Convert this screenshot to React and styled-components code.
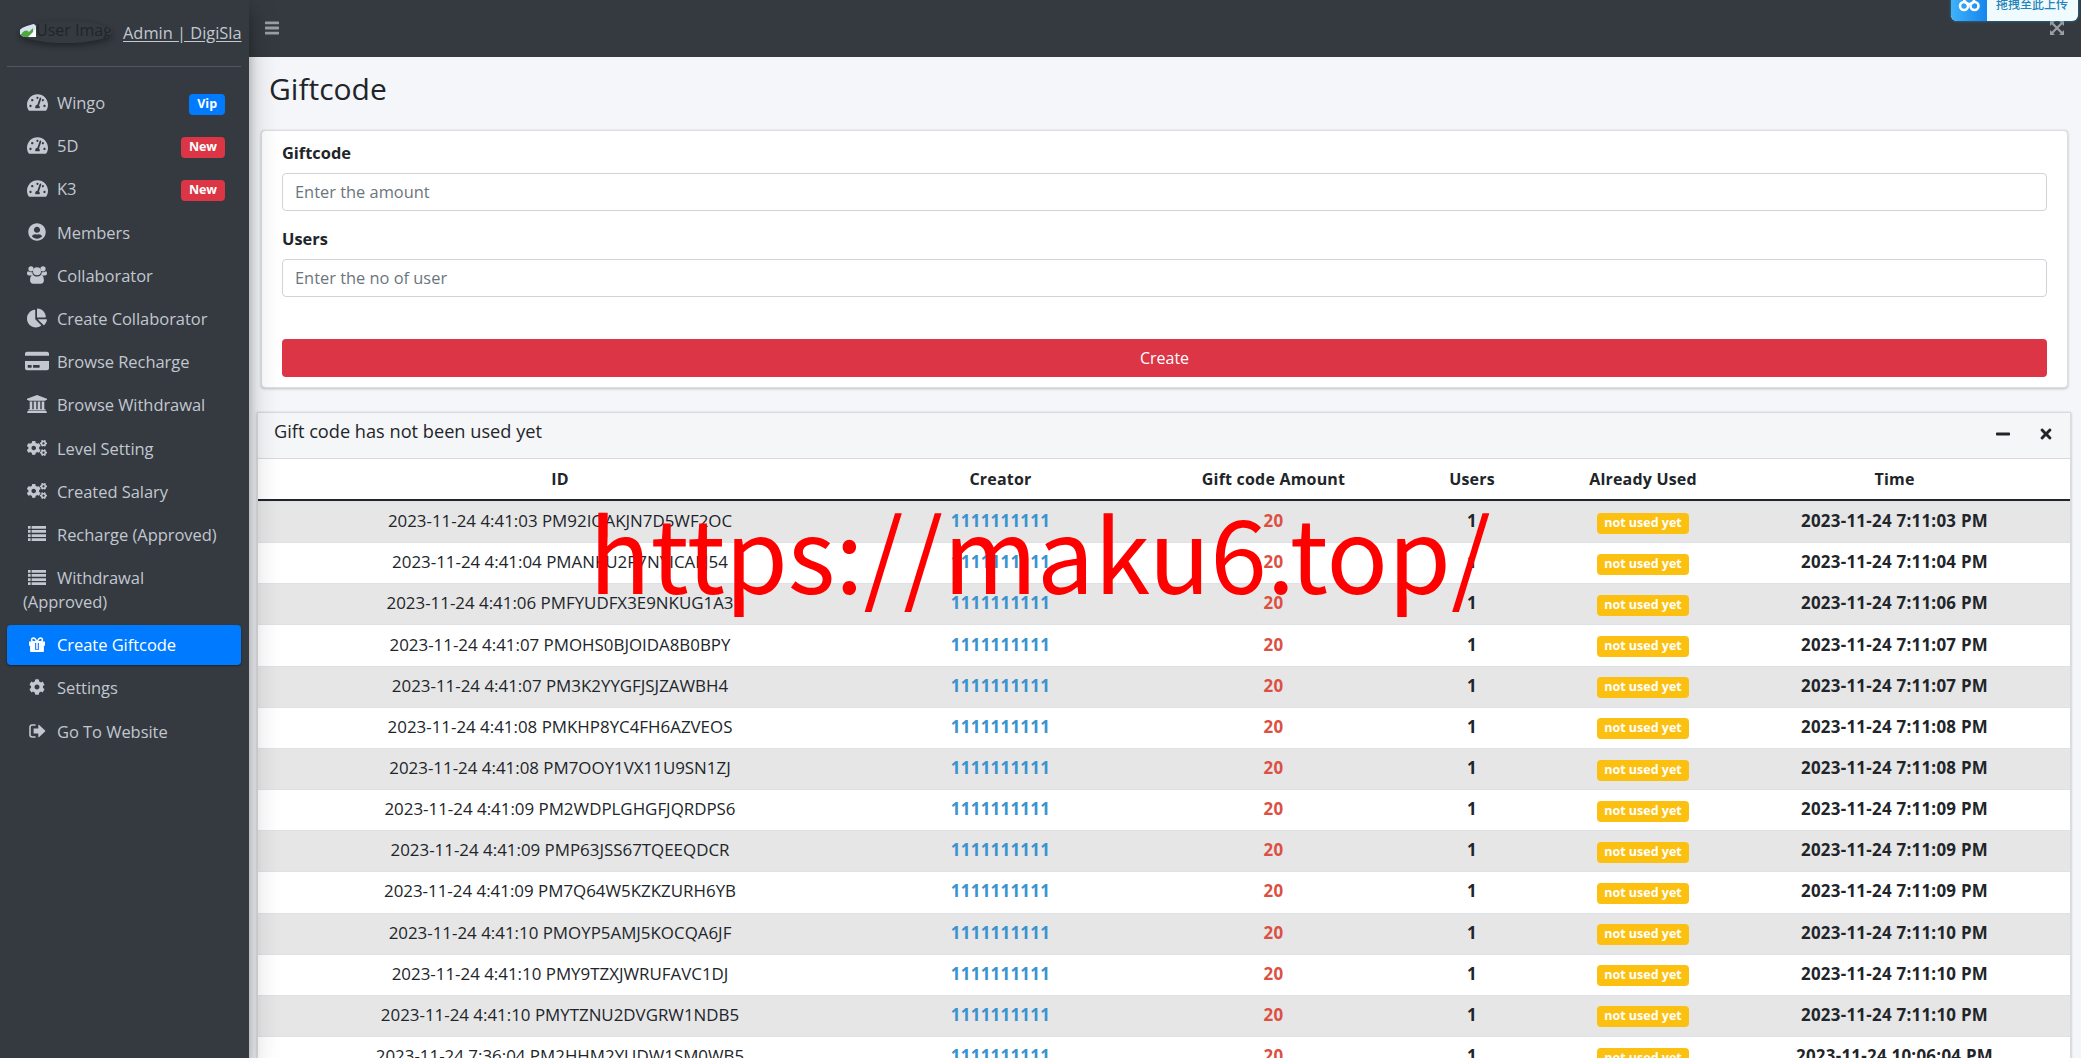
import React from "react";
import styled, { createGlobalStyle, css } from "styled-components";
import {
  FaTachometerAlt,
  FaUserCircle,
  FaChartPie,
  FaCreditCard,
  FaMinus,
  FaTimes,
  FaCog,
  FaCogs,
} from "react-icons/fa";

const GlobalStyle = createGlobalStyle`
  * {
    box-sizing: border-box;
  }

  body {
    margin: 0;
    overflow: hidden;
    font-family: "Open Sans", "Noto Sans", "Noto Sans CJK SC", sans-serif;
    font-size: 16px;
    line-height: 1.5;
    color: #212529;
    background: #f4f6f9;
  }
`;

const Wrapper = styled.div`
  display: flex;
  position: relative;
  width: 100%;
  height: 1058px;
  overflow: hidden;
`;

const Sidebar = styled.aside`
  position: relative;
  z-index: 2;
  flex: none;
  width: 249px;
  height: 100%;
  padding: 0 8px 0 7px;
  background: #343a40;
  color: #c2c7d0;
  box-shadow: 0 14px 28px rgba(0, 0, 0, 0.25), 0 10px 10px rgba(0, 0, 0, 0.22);
`;

const UserPanel = styled.div`
  display: flex;
  height: 67px;
  padding: 21px 0 0 12px;
  border-bottom: 1px solid #4f5962;

  a {
    margin-left: 11px;
    font-size: 16.4px;
    line-height: 24px;
    white-space: nowrap;
    text-decoration: underline;
    text-underline-offset: 2px;
    color: #c2c7d0;
  }
`;

const Avatar = styled.div`
  display: flex;
  flex: none;
  width: 93px;
  height: 22px;
  padding-left: 1px;
  border-radius: 50%;
  overflow: hidden;
  color: #212529;
  line-height: 18px;
  white-space: nowrap;
  box-shadow: 0 3px 6px rgba(0, 0, 0, 0.16), 0 3px 6px rgba(0, 0, 0, 0.23);

  svg {
    flex: none;
  }
`;

const Nav = styled.nav`
  margin-top: 16px;
`;

const NavLink = styled.a`
  display: block;
  position: relative;
  margin-bottom: 3.2px;
  padding: 8px 16px;
  border-radius: 4px;
  font-size: 16.5px;
  line-height: 24px;
  letter-spacing: -0.05px;
  color: #c2c7d0;

  ${(props) =>
    props.$active &&
    css`
      color: #fff;
      background: #007bff;
      box-shadow: 0 1px 3px rgba(0, 0, 0, 0.12), 0 1px 2px rgba(0, 0, 0, 0.24);
    `}
`;

const NavIcon = styled.span`
  display: inline-flex;
  align-items: center;
  justify-content: center;
  width: 28px;
  height: 20px;
  margin: 1px 6px 0 0;
  font-size: ${(props) => props.$size || 18}px;
  vertical-align: top;
`;

const Badge = styled.span`
  display: inline-block;
  padding: 4px 7px 5px;
  border-radius: 4px;
  font-size: 12.5px;
  font-weight: 700;
  line-height: 12px;
  color: #fff;
  background: ${(props) => props.$bg};
`;

const NavBadge = styled(Badge)`
  position: absolute;
  top: 11px;
  right: 16px;
  padding: 4px 8px 5px;
`;

const Main = styled.div`
  flex: 1;
  min-width: 0;
`;

const Topbar = styled.header`
  display: flex;
  justify-content: space-between;
  height: 57px;
  padding: 21px 17px 0 16px;
  background: #343a40;
  color: #9c9fa2;
  font-size: 14px;
`;

const Title = styled.h1`
  margin: 0;
  padding: 10px 0 0 20px;
  height: 73px;
  font-size: 30px;
  font-weight: 400;
  line-height: 43px;
`;

const FormCard = styled.section`
  height: 258px;
  margin: 0 13px 0 12px;
  padding: 9px 20px 0;
  border: 1px solid #dcdee1;
  border-radius: 4px;
  background: #fff;
  box-shadow: 0 0 1px rgba(0, 0, 0, 0.13), 0 1px 3px rgba(0, 0, 0, 0.2);
`;

const Field = styled.div`
  height: 86px;
  font-size: 16.4px;

  label {
    display: block;
    height: 33px;
    font-weight: 700;
    line-height: 26px;
  }

  input {
    display: block;
    width: 100%;
    height: 38px;
    padding: 5px 12px 7px;
    border: 1px solid #ced4da;
    border-radius: 4px;
    font: inherit;
    background: #fff;
  }

  input::placeholder {
    color: #6c757d;
    opacity: 1;
  }
`;

const CreateButton = styled.button`
  display: block;
  width: 100%;
  height: 38px;
  margin-top: 27px;
  border: 0;
  border-radius: 4px;
  font: inherit;
  color: #fff;
  background: #dc3545;
`;

const TableCard = styled.section`
  margin: 24px 10px 0 8px;
  border: 1px solid #d9dbdf;
  background: #fff;
  box-shadow: 0 0 1px rgba(0, 0, 0, 0.13), 0 1px 3px rgba(0, 0, 0, 0.2);
`;

const CardHeader = styled.div`
  display: flex;
  justify-content: space-between;
  height: 46px;
  padding: 5px 16px 0 16px;
  border-bottom: 1px solid #d7d9dc;
  background: #f5f6f8;
  font-size: 18.2px;
  line-height: 27px;
`;

const CardTools = styled.div`
  display: flex;
  gap: 27px;
  padding-top: 8px;
  font-size: 16px;
`;

const Table = styled.table`
  width: 100%;
  table-layout: fixed;
  border-collapse: separate;
  border-spacing: 0;
  text-align: center;

  th {
    height: 42px;
    padding: 0;
    border-bottom: 2px solid #212529;
    font-size: 16px;
    letter-spacing: 0.2px;
  }

  td {
    height: 41.17px;
    padding: 0 0 2px;
    border-top: 1px solid #dee2e6;
    font-size: 16.9px;
    line-height: 24px;
    white-space: nowrap;
  }

  tbody tr:nth-child(odd) {
    background: #e6e6e7;
  }
`;

const Strong = styled.td`
  font-weight: 700;
  letter-spacing: 0.27px;
  color: ${(props) => props.$color || "#212529"};
`;

const Watermark = styled.div`
  position: absolute;
  z-index: 3;
  top: 472px;
  left: 589px;
  font-family: "Noto Sans CJK SC", sans-serif;
  font-size: 101.5px;
  line-height: 155px;
  white-space: nowrap;
  color: #fe0000;
`;

const UploadTip = styled.div`
  display: flex;
  position: absolute;
  z-index: 4;
  top: -15px;
  left: 1951px;
  width: 127px;
  height: 36px;
  border-radius: 6px;
  overflow: hidden;
  background: #f0fbff;
  box-shadow: 0 0 3px #2680b8;
  color: #1f83b8;
  font: 500 12px/37px "Noto Sans CJK SC", sans-serif;

  span {
    padding-left: 9px;
    white-space: nowrap;
  }
`;

const BrokenImage = () => (
  <svg width="16" height="16" viewBox="0 0 16 16">
    <path d="M0 0h11l5 5v11H0z" fill="#d5e3f5" />
    <path d="M0 16c2-6 6-8 9-5l4-4v9z" fill="#4fa83d" />
    <path d="M8 16 16 8v8z" fill="#fff" />
  </svg>
);

const BarsIcon = () => (
  <svg width="14" height="14" viewBox="0 0 14 14" fill="currentColor">
    <rect y="0.5" width="14" height="2.8" rx="0.4" />
    <rect y="5.6" width="14" height="2.8" rx="0.4" />
    <rect y="10.7" width="14" height="2.8" rx="0.4" />
  </svg>
);

const ArrowsIcon = () => (
  <svg width="14" height="14" viewBox="0 0 14 14" fill="currentColor">
    <path d="M0 0h5L0 5zM14 0v5L9 0zM0 14V9l5 5zM14 14H9l5-5z" />
    <path d="M2 2l10 10M12 2 2 12" stroke="currentColor" strokeWidth="2.2" />
  </svg>
);

const ListIcon = () => (
  <svg width="18" height="15" viewBox="0 0 18 15" fill="currentColor">
    <path d="M0 0h2.6v2.7H0zM0 4.1h2.6v2.7H0zM0 8.2h2.6v2.7H0zM0 12.3h2.6V15H0z" />
    <path d="M3.6 0H18v2.7H3.6zM3.6 4.1H18v2.7H3.6zM3.6 8.2H18v2.7H3.6zM3.6 12.3H18V15H3.6z" />
  </svg>
);

const UsersIcon = () => (
  <svg width="20" height="18" viewBox="0 0 20 18" fill="currentColor">
    <circle cx="4" cy="2.8" r="2.6" />
    <circle cx="16" cy="2.8" r="2.6" />
    <circle cx="10" cy="5.3" r="4" />
    <path d="M1.6 5.4c1.2.9 2.7 1 3.7.5 0 1.4.4 2.6 1.2 3.5H2C.6 9.4 0 8.7 0 7.6 0 6.3.4 5 1.6 5.4zM18.4 5.4c-1.2.9-2.7 1-3.7.5 0 1.4-.4 2.6-1.2 3.5H18c1.4 0 2-.7 2-1.8 0-1.3-.4-2.6-1.6-2.2z" />
    <path d="M6.2 9c2.3 2 5.3 2 7.6 0 2.4 0 3.1 2.8 3.1 5.6 0 2-1.2 3.2-3 3.2H6.1c-1.8 0-3-1.2-3-3.2C3.1 11.8 3.8 9 6.2 9z" />
  </svg>
);

const BankIcon = () => (
  <svg width="20" height="18" viewBox="0 0 20 18" fill="currentColor">
    <path d="M10 0l10 3.7V5h-1.4v.8H1.4V5H0V3.7zM2.7 6.5h2.6v7.7h1.4V6.5h2.6v7.7h1.4V6.5h2.6v7.7h1.4V6.5h2.6v7.7h1.3v1.2H1.4v-1.2h1.3zM.7 16h18.6l.7 2H0z" />
  </svg>
);

const GiftIcon = () => (
  <svg width="16" height="15" viewBox="0 0 16 15" fill="currentColor">
    <path d="M0 4.6h16v4.2h-1.1v5.1c0 .7-.4 1.1-1.1 1.1H2.2c-.7 0-1.1-.4-1.1-1.1V8.8H0z" />
    <path d="M6.1 5.8h3.8v7H6.1z" fill="#007bff" />
    <path d="M7.2 4.8h1.6v7.1H7.2z" />
    <path
      d="M7.8 4.8C6.8 2.3 5.7 1 4.5 1S2.6 2 2.6 2.9s.8 1.9 1.9 1.9zM8.2 4.8C9.2 2.3 10.3 1 11.5 1s1.9 1 1.9 1.9-.8 1.9-1.9 1.9z"
      fill="none"
      stroke="currentColor"
      strokeWidth="1.5"
    />
  </svg>
);

const SignOutIcon = () => (
  <svg width="17" height="14" viewBox="0 0 17 14" fill="currentColor">
    <path
      d="M6 1H3.2C1.8 1 1 1.8 1 3.2v7.6C1 12.2 1.8 13 3.2 13H6"
      fill="none"
      stroke="currentColor"
      strokeWidth="1.6"
      strokeLinecap="round"
    />
    <path d="M4.6 4.6h4.7V1.2c0-.5.4-.7.9-.3l5.9 5.6c.3.3.3.7 0 1l-5.9 5.6c-.5.4-.9.2-.9-.3V9.4H4.6z" />
  </svg>
);

const links = [
  { icon: <FaTachometerAlt />, text: "Wingo", badge: "Vip", bg: "#007bff", size: 21 },
  { icon: <FaTachometerAlt />, text: "5D", badge: "New", bg: "#dc3545", size: 21 },
  { icon: <FaTachometerAlt />, text: "K3", badge: "New", bg: "#dc3545", size: 21 },
  { icon: <FaUserCircle />, text: "Members" },
  { icon: <UsersIcon />, text: "Collaborator" },
  { icon: <FaChartPie />, text: "Create Collaborator", size: 20 },
  { icon: <FaCreditCard />, text: "Browse Recharge", size: 24 },
  { icon: <BankIcon />, text: "Browse Withdrawal" },
  { icon: <FaCogs />, text: "Level Setting", size: 20 },
  { icon: <FaCogs />, text: "Created Salary", size: 20 },
  { icon: <ListIcon />, text: "Recharge (Approved)" },
  { icon: <ListIcon />, text: "Withdrawal (Approved)" },
  { icon: <GiftIcon />, text: "Create Giftcode", active: true },
  { icon: <FaCog />, text: "Settings", size: 16 },
  { icon: <SignOutIcon />, text: "Go To Website" },
];

const rows = [
  ["2023-11-24 4:41:03 PM92IOAKJN7D5WF2OC", "2023-11-24 7:11:03 PM"],
  ["2023-11-24 4:41:04 PMANKU2P7NYICALJ54", "2023-11-24 7:11:04 PM"],
  ["2023-11-24 4:41:06 PMFYUDFX3E9NKUG1A3", "2023-11-24 7:11:06 PM"],
  ["2023-11-24 4:41:07 PMOHS0BJOIDA8B0BPY", "2023-11-24 7:11:07 PM"],
  ["2023-11-24 4:41:07 PM3K2YYGFJSJZAWBH4", "2023-11-24 7:11:07 PM"],
  ["2023-11-24 4:41:08 PMKHP8YC4FH6AZVEOS", "2023-11-24 7:11:08 PM"],
  ["2023-11-24 4:41:08 PM7OOY1VX11U9SN1ZJ", "2023-11-24 7:11:08 PM"],
  ["2023-11-24 4:41:09 PM2WDPLGHGFJQRDPS6", "2023-11-24 7:11:09 PM"],
  ["2023-11-24 4:41:09 PMP63JSS67TQEEQDCR", "2023-11-24 7:11:09 PM"],
  ["2023-11-24 4:41:09 PM7Q64W5KZKZURH6YB", "2023-11-24 7:11:09 PM"],
  ["2023-11-24 4:41:10 PMOYP5AMJ5KOCQA6JF", "2023-11-24 7:11:10 PM"],
  ["2023-11-24 4:41:10 PMY9TZXJWRUFAVC1DJ", "2023-11-24 7:11:10 PM"],
  ["2023-11-24 4:41:10 PMYTZNU2DVGRW1NDB5", "2023-11-24 7:11:10 PM"],
  ["2023-11-24 7:36:04 PM2HHM2YUDW1SM0WB5", "2023-11-24 10:06:04 PM"],
];

export default function App() {
  return (
    <Wrapper>
      <GlobalStyle />
      <Sidebar>
        <UserPanel>
          <Avatar>
            <BrokenImage />
            User Image
          </Avatar>
          <a>Admin | DigiSla</a>
        </UserPanel>
        <Nav>
          {links.map((link) => (
            <NavLink key={link.text} $active={link.active}>
              <NavIcon $size={link.size}>{link.icon}</NavIcon>
              {link.text}
              {link.badge && <NavBadge $bg={link.bg}>{link.badge}</NavBadge>}
            </NavLink>
          ))}
        </Nav>
      </Sidebar>
      <Main>
        <Topbar>
          <BarsIcon />
          <ArrowsIcon />
        </Topbar>
        <Title>Giftcode</Title>
        <FormCard>
          <Field>
            <label>Giftcode</label>
            <input placeholder="Enter the amount" />
          </Field>
          <Field>
            <label>Users</label>
            <input placeholder="Enter the no of user" />
          </Field>
          <CreateButton>Create</CreateButton>
        </FormCard>
        <TableCard>
          <CardHeader>
            Gift code has not been used yet
            <CardTools>
              <FaMinus />
              <FaTimes />
            </CardTools>
          </CardHeader>
          <Table>
            <colgroup>
              <col width="604" />
              <col width="277" />
              <col width="269" />
              <col width="128" />
              <col width="214" />
              <col width="289" />
              <col />
            </colgroup>
            <thead>
              <tr>
                <th>ID</th>
                <th>Creator</th>
                <th>Gift code Amount</th>
                <th>Users</th>
                <th>Already Used</th>
                <th>Time</th>
                <th />
              </tr>
            </thead>
            <tbody>
              {rows.map(([id, time]) => (
                <tr key={id}>
                  <td>{id}</td>
                  <Strong $color="#3a93cf">1111111111</Strong>
                  <Strong $color="#dc5044">20</Strong>
                  <Strong>1</Strong>
                  <td>
                    <Badge $bg="#fcc011">not used yet</Badge>
                  </td>
                  <Strong>{time}</Strong>
                  <td />
                </tr>
              ))}
            </tbody>
          </Table>
        </TableCard>
      </Main>
      <Watermark>https://maku6.top/</Watermark>
      <UploadTip>
        <svg width="36" height="36" viewBox="0 0 36 36">
          <defs>
            <linearGradient id="tip" x1="0" x2="1">
              <stop offset="0" stopColor="#3fb2f8" />
              <stop offset="1" stopColor="#1585f0" />
            </linearGradient>
          </defs>
          <rect width="36" height="36" fill="url(#tip)" />
          <g fill="none" stroke="#fff" strokeWidth="2.6">
            <circle cx="13" cy="21" r="4" />
            <circle cx="23.5" cy="21" r="4" />
            <circle cx="18.2" cy="14" r="5" />
          </g>
        </svg>
        <span>拖拽至此上传</span>
      </UploadTip>
    </Wrapper>
  );
}
